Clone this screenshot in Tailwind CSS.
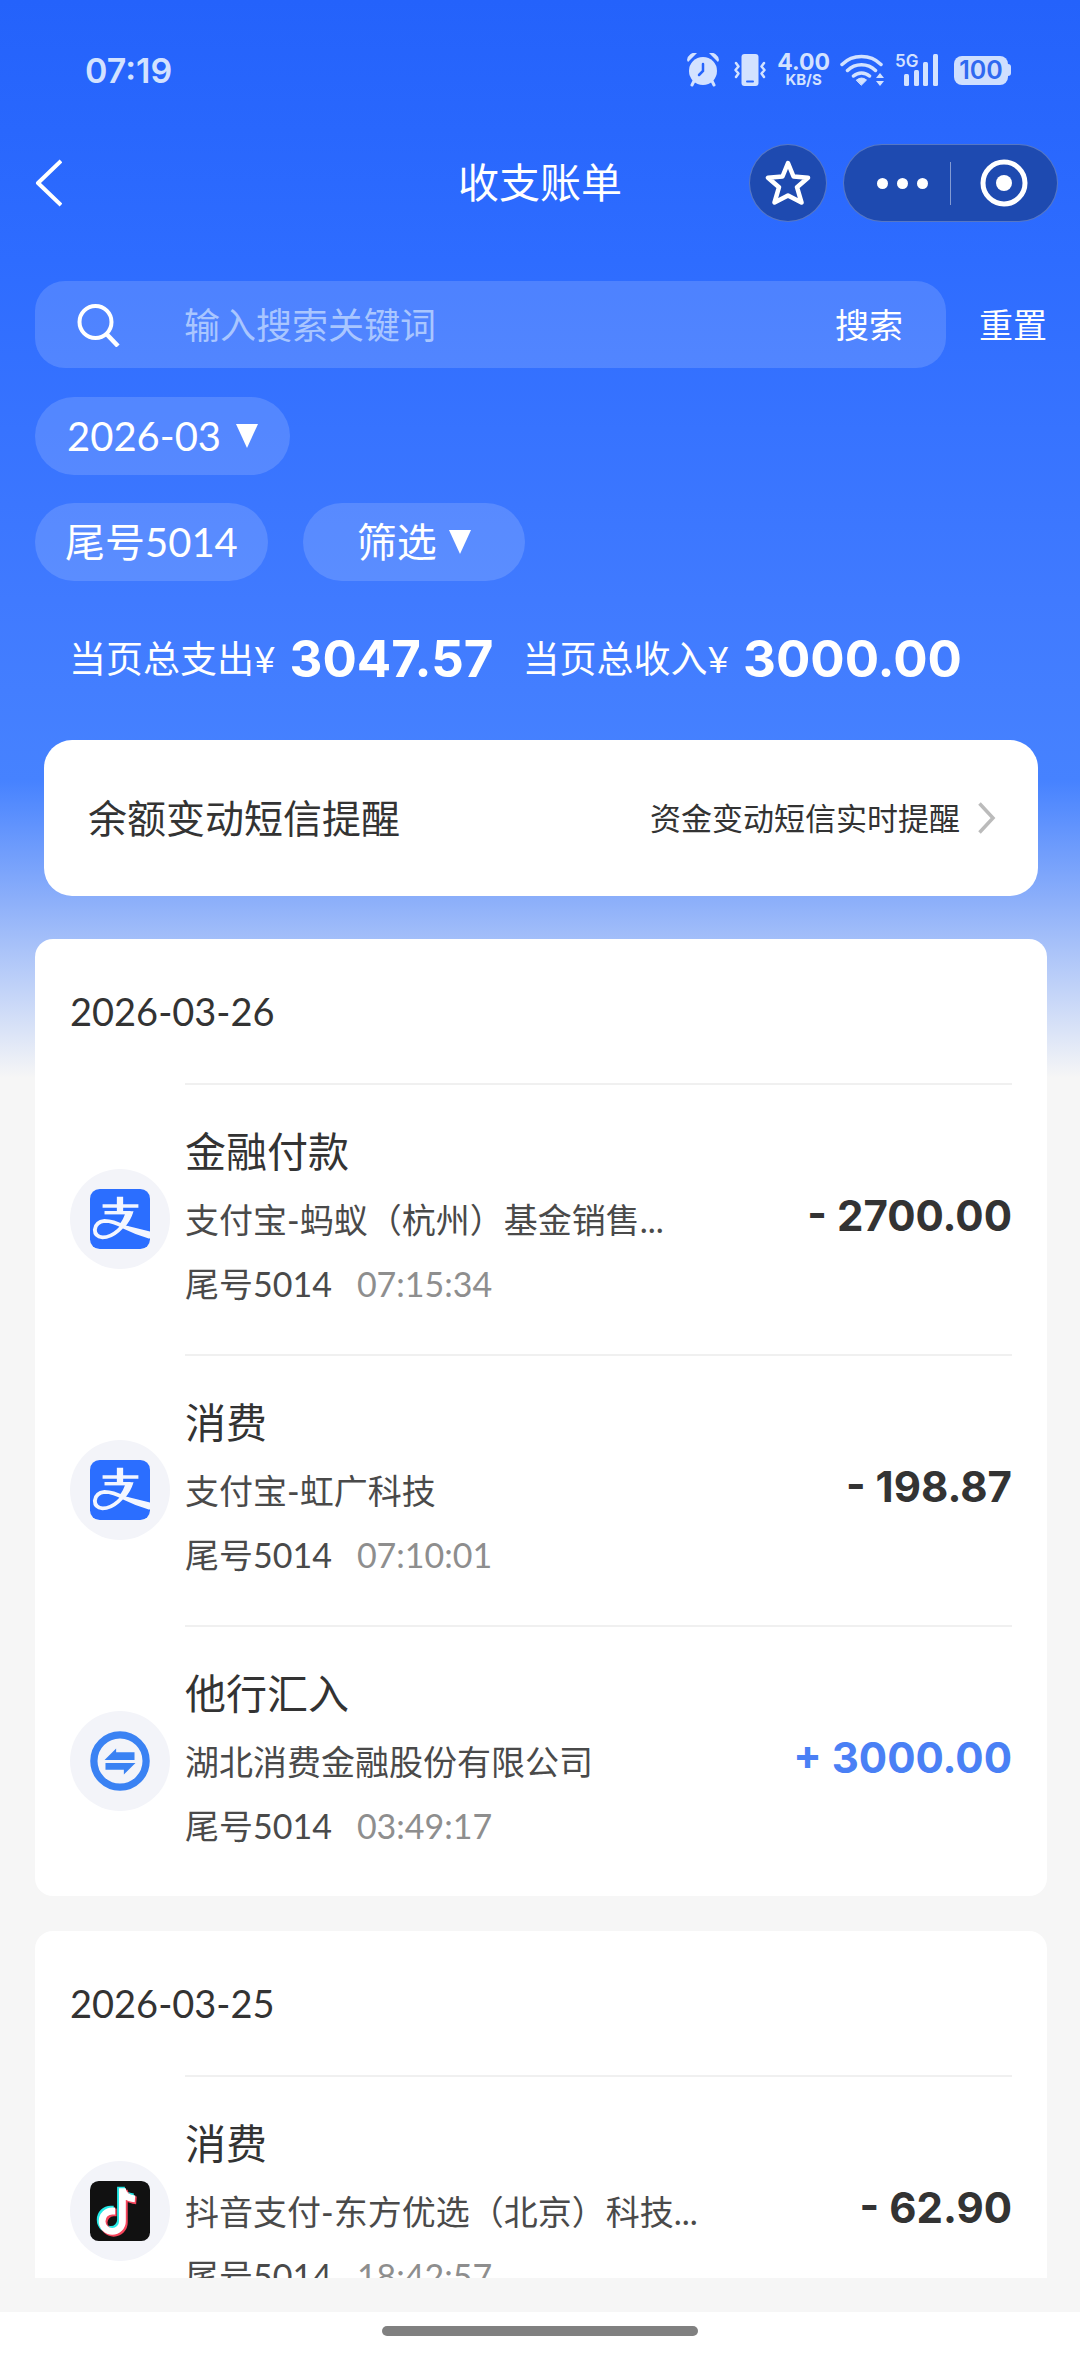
<!DOCTYPE html>
<html lang="zh-CN">
<head>
<meta charset="utf-8">
<meta name="viewport" content="width=device-width, initial-scale=1">
<title>收支账单</title>
<script src="https://cdn.jsdelivr.net/npm/@tailwindcss/browser@4"></script>
</head>
<body class="flex h-screen flex-col overflow-hidden bg-[#f6f6f6] bg-[linear-gradient(to_bottom,#2462fb_0px,#2e6cff_260px,#407aff_600px,#4682ff_780px,#8caffa_900px,#f6f6f6_1078px)] font-['Lato','Noto_Sans_CJK_SC',sans-serif] text-[#333]">

<!-- 状态栏 -->
<div class="flex h-[140px] shrink-0 items-center justify-between pl-[85px] pr-[69px] text-[#d3e2ff]">
  <time class="font-['Inter',sans-serif] text-[34px] font-semibold">07:19</time>
  <div class="flex items-center">
    <svg class="mr-[15px] h-[34px] w-8" viewBox="0 0 32 34" fill="currentColor" aria-label="闹钟">
      <path d="M0 7a8 8 0 0 1 10-7L1 9zM32 7a8 8 0 0 0-10-7l9 9z"/>
      <path d="M7 28l-2 4M25 28l2 4" stroke="currentColor" stroke-width="3" stroke-linecap="round"/>
      <circle cx="16" cy="18" r="14"/>
      <path d="M16 11v7l-4 4" fill="none" stroke="#2664fc" stroke-width="2.5" stroke-linecap="round"/>
    </svg>
    <svg class="mr-[11px] h-8 w-8" viewBox="0 0 32 32" fill="none" stroke="currentColor" stroke-width="2.5" stroke-linecap="round" stroke-linejoin="round" aria-label="振动">
      <rect x="7.500" y="0" width="17" height="32" rx="3" fill="currentColor" stroke="none"/>
      <path d="M13 27.500h6" stroke="#2664fc" stroke-width="2"/>
      <path d="M2 9l2.500 3.500L1.500 16l3 3.500L2 23M30 9l-2.500 3.500 3 3.500-3 3.500L30 23"/>
    </svg>
    <div class="mr-[10px] text-center font-['Inter',sans-serif] font-bold">
      <div class="text-[23px] leading-[19px]">4.00</div>
      <div class="text-[15px] leading-[15px]">KB/S</div>
    </div>
    <svg class="mr-3 h-8 w-11" viewBox="0 0 44 32" fill="none" stroke="currentColor" stroke-width="3.500" stroke-linecap="round" aria-label="无线网络">
      <path d="M2 10.500a28 28 0 0 1 39 0M7.500 16.500a20 20 0 0 1 28 0M13.500 22a12 12 0 0 1 16 0"/>
      <path d="M16.500 26q5-4 10 0l-5 5z" fill="currentColor" stroke-width="1"/>
      <path d="M36 24l4-5 4 5zM36 27l4 5 4-5z" fill="currentColor" stroke="none"/>
    </svg>
    <svg class="mr-4 h-8 w-[42px] overflow-visible" viewBox="0 0 42 32" fill="currentColor" aria-label="5G信号">
      <text x="-1" y="13" class="font-['Inter',sans-serif] text-[17px] font-semibold">5G</text>
      <rect x="8" y="20" width="5" height="12" rx="1.500"/><rect x="18" y="16" width="5" height="16" rx="1.500"/>
      <rect x="27" y="8" width="5" height="24" rx="1.500"/><rect x="37" y="0" width="5" height="32" rx="1.500"/>
    </svg>
    <div class="flex items-center">
      <div class="flex h-[29px] w-[54px] items-center justify-center rounded-lg bg-[#cfdffe] font-['Inter',sans-serif] text-[25px] font-semibold leading-[29px] text-[#2f69f0]">100</div>
      <div class="h-3 w-[3px] rounded-r-full bg-[#cfdffe]"></div>
    </div>
  </div>
</div>

<!-- 导航栏 -->
<header class="grid h-[86px] shrink-0 grid-cols-[1fr_auto_1fr] items-center px-[22px] text-white">
  <button type="button" aria-label="返回" class="ml-3 justify-self-start">
    <svg class="h-12 w-7" viewBox="0 0 28 48" fill="none" stroke="currentColor" stroke-width="4" stroke-linejoin="round"><path d="M27 2L4 24l23 22"/></svg>
  </button>
  <h1 class="text-[41px] leading-[60px]">收支账单</h1>
  <div class="flex items-center gap-4 justify-self-end">
    <button type="button" aria-label="收藏" class="flex size-[78px] items-center justify-center rounded-full border border-white/25 bg-[#1e4ab0]">
      <svg class="size-[46px]" viewBox="0 0 46 46" fill="none" stroke="currentColor" stroke-width="4.500" stroke-linejoin="round"><path d="M23 3l5.500 13.500 14.500 1.200-11 9.500 4.500 15.300L23 35.500 9.500 42.500 14 27.200 3 17.700l14.500-1.200z"/></svg>
    </button>
    <div class="flex h-[78px] items-center rounded-full border border-white/25 bg-[#1e4ab0] pl-[33px] pr-[29px]">
      <button type="button" aria-label="更多" class="flex items-center gap-[9px] pr-[22px]">
        <span class="size-[11px] rounded-full bg-white"></span><span class="size-[11px] rounded-full bg-white"></span><span class="size-[11px] rounded-full bg-white"></span>
      </button>
      <span class="h-[43px] w-px bg-white/45"></span>
      <button type="button" aria-label="关闭" class="ml-[29px]">
        <svg class="size-[48px]" viewBox="0 0 48 48"><circle cx="24" cy="24" r="21" fill="none" stroke="currentColor" stroke-width="5"/><circle cx="24" cy="24" r="8" fill="currentColor"/></svg>
      </button>
    </div>
  </div>
</header>

<!-- 搜索与筛选 -->
<form class="mt-[55px] flex shrink-0 items-center pl-[35px] pr-[33px] text-[34px] text-white">
  <div class="flex h-[87px] min-w-0 flex-1 items-center rounded-[30px] bg-white/15 pl-[42px] pr-[43px]">
    <svg class="mr-[63px] size-[44px] shrink-0" viewBox="0 0 44 44" fill="none" stroke="currentColor" stroke-width="4" aria-hidden="true"><circle cx="18.500" cy="19" r="16"/><path d="M29.500 31L41 43" stroke-width="4.500"/></svg>
    <input type="search" aria-label="搜索关键词" placeholder="输入搜索关键词" class="h-[60px] min-w-0 flex-1 bg-transparent text-[36px] outline-none placeholder:text-[#a9c6ff]">
    <button type="submit" class="shrink-0 leading-[60px]">搜索</button>
  </div>
  <button type="reset" class="ml-[33px] shrink-0 leading-[60px]">重置</button>
</form>
<div class="mt-[29px] flex shrink-0 pl-[35px] text-[40px] text-white">
  <label class="flex h-[78px] items-center gap-[14px] rounded-full bg-white/15 px-8">
    <select aria-label="月份" class="appearance-none bg-transparent leading-[60px] outline-none"><option>2026-03</option></select>
    <svg class="h-6 w-[22px]" viewBox="0 0 22 24" fill="currentColor" aria-hidden="true"><path d="M0 0h22L11 24z"/></svg>
  </label>
</div>
<div class="mt-7 flex shrink-0 gap-[35px] pl-[35px] text-[40px] text-white">
  <button type="button" class="h-[78px] rounded-full bg-white/15 px-[30px] leading-[60px]">尾号5014</button>
  <button type="button" class="flex h-[78px] items-center gap-3 rounded-full bg-white/15 px-[54px] leading-[60px]">筛选
    <svg class="h-6 w-[22px]" viewBox="0 0 22 24" fill="currentColor" aria-hidden="true"><path d="M0 0h22L11 24z"/></svg>
  </button>
</div>

<!-- 当页合计 -->
<dl class="mt-[42px] flex h-[72px] shrink-0 items-center pl-[69px] text-white">
  <dt class="text-[37px] leading-[60px]">当页总支出¥</dt>
  <dd class="ml-[14px] mr-[29px] font-['Inter',sans-serif] text-[51px] font-bold leading-[60px]">3047.57</dd>
  <dt class="text-[37px] leading-[60px]">当页总收入¥</dt>
  <dd class="ml-[14px] font-['Inter',sans-serif] text-[51px] font-bold leading-[60px]">3000.00</dd>
</dl>

<a href="#sms" class="ml-[44px] mr-[42px] mt-[45px] flex h-[156px] shrink-0 items-center rounded-[28px] bg-white pl-11 pr-[42px]">
  <span class="flex-1 text-[39px] leading-[60px]">余额变动短信提醒</span>
  <span class="mr-[18px] text-[31px] leading-[60px]">资金变动短信实时提醒</span>
  <svg class="h-8 w-[18px]" viewBox="0 0 18 32" fill="none" stroke="#bbb" stroke-width="3.500" aria-hidden="true"><path d="M1.500 1.500L15 16 1.500 30.500"/></svg>
</a>

<!-- 账单列表 -->
<main class="ml-[35px] mr-[33px] mt-[43px] flex min-h-0 flex-1 flex-col gap-[35px] overflow-hidden">
  <section class="shrink-0 rounded-[18px] bg-white px-[35px]">
    <h2 class="flex h-[144px] items-center text-[38px]">2026-03-26</h2>
    <ul>
      <li class="flex items-center gap-[15px]">
        <span class="flex size-[100px] shrink-0 items-center justify-center rounded-full bg-[#f3f4f9]">
          <svg class="size-[60px]" viewBox="0 0 62 62" aria-label="支付宝">
            <rect width="62" height="62" rx="10" fill="#2b6eff"/>
            <g fill="none" stroke="#f3f6ff"><path d="M13 17.500h37" stroke-width="3.500"/><path d="M31 8v17" stroke-width="6.500"/><path d="M15 24.500h27" stroke-width="3.500"/><path d="M42 24q-5 12-13 19-8 7-16 7-8-1-8-8 1-8 10-9 9 0 20 6 12 6 27 10.500" stroke-width="4"/></g>
            <path d="M37 23h8q-3 10-9 16l-6-2q5-6 7-14zM38 38l24 6v7L34 39z" fill="#f3f6ff"/>
          </svg>
        </span>
        <div class="flex min-w-0 flex-1 items-center border-t-2 border-[#f0f0f0] pb-[38px] pt-[31px]">
          <div class="min-w-0 flex-1">
            <h3 class="text-[41px] leading-[72px]">金融付款</h3>
            <p class="truncate text-[34px] leading-[64px] text-[#4a4a4a]">支付宝-蚂蚁（杭州）基金销售...</p>
            <p class="flex gap-[25px] text-[34px] leading-[64px] text-[#4a4a4a]">尾号5014<time class="text-[#8e8e8e]">07:15:34</time></p>
          </div>
          <strong class="font-['Inter',sans-serif] text-[42px] font-bold leading-[60px]">- 2700.00</strong>
        </div>
      </li>
      <li class="flex items-center gap-[15px]">
        <span class="flex size-[100px] shrink-0 items-center justify-center rounded-full bg-[#f3f4f9]">
          <svg class="size-[60px]" viewBox="0 0 62 62" aria-label="支付宝">
            <rect width="62" height="62" rx="10" fill="#2b6eff"/>
            <g fill="none" stroke="#f3f6ff"><path d="M13 17.500h37" stroke-width="3.500"/><path d="M31 8v17" stroke-width="6.500"/><path d="M15 24.500h27" stroke-width="3.500"/><path d="M42 24q-5 12-13 19-8 7-16 7-8-1-8-8 1-8 10-9 9 0 20 6 12 6 27 10.500" stroke-width="4"/></g>
            <path d="M37 23h8q-3 10-9 16l-6-2q5-6 7-14zM38 38l24 6v7L34 39z" fill="#f3f6ff"/>
          </svg>
        </span>
        <div class="flex min-w-0 flex-1 items-center border-t-2 border-[#f0f0f0] pb-[38px] pt-[31px]">
          <div class="min-w-0 flex-1">
            <h3 class="text-[41px] leading-[72px]">消费</h3>
            <p class="truncate text-[34px] leading-[64px] text-[#4a4a4a]">支付宝-虹广科技</p>
            <p class="flex gap-[25px] text-[34px] leading-[64px] text-[#4a4a4a]">尾号5014<time class="text-[#8e8e8e]">07:10:01</time></p>
          </div>
          <strong class="font-['Inter',sans-serif] text-[42px] font-bold leading-[60px]">- 198.87</strong>
        </div>
      </li>
      <li class="flex items-center gap-[15px]">
        <span class="flex size-[100px] shrink-0 items-center justify-center rounded-full bg-[#f3f4f9]">
          <svg class="size-[60px]" viewBox="0 0 62 62" aria-label="转账">
            <circle cx="31" cy="31" r="27" fill="none" stroke="#3a82f3" stroke-width="7.500"/>
            <path d="M15 30l12-12v4h19v8zM47 33H16v7h19v5z" fill="#3a82f3"/>
          </svg>
        </span>
        <div class="flex min-w-0 flex-1 items-center border-t-2 border-[#f0f0f0] pb-[38px] pt-[31px]">
          <div class="min-w-0 flex-1">
            <h3 class="text-[41px] leading-[72px]">他行汇入</h3>
            <p class="truncate text-[34px] leading-[64px] text-[#4a4a4a]">湖北消费金融股份有限公司</p>
            <p class="flex gap-[25px] text-[34px] leading-[64px] text-[#4a4a4a]">尾号5014<time class="text-[#8e8e8e]">03:49:17</time></p>
          </div>
          <strong class="font-['Inter',sans-serif] text-[42px] font-bold leading-[60px] text-[#4a80f5]">+ 3000.00</strong>
        </div>
      </li>
    </ul>
  </section>

  <section class="shrink-0 rounded-[18px] bg-white px-[35px]">
    <h2 class="flex h-[144px] items-center text-[38px]">2026-03-25</h2>
    <ul>
      <li class="flex items-center gap-[15px]">
        <span class="flex size-[100px] shrink-0 items-center justify-center rounded-full bg-[#f3f4f9]">
          <svg class="size-[60px]" viewBox="0 0 62 62" aria-label="抖音">
            <rect width="62" height="62" rx="9" fill="#111"/>
            <g fill="none" stroke-width="8">
              <path d="M32 6v34a10.500 10.500 0 1 1-10.500-10.500h3M32 7q1 9 13 10" stroke="#25e8e6"/>
              <path d="M35 9v34a10.500 10.500 0 1 1-10.500-10.500h3M35 10q1 9 13 10" stroke="#f5455c"/>
              <path d="M33.500 7.500v34a10.500 10.500 0 1 1-10.500-10.500h3M33.500 8.500q1 9 13 10" stroke="#fff" stroke-width="7"/>
            </g>
          </svg>
        </span>
        <div class="flex min-w-0 flex-1 items-center border-t-2 border-[#f0f0f0] pb-[38px] pt-[31px]">
          <div class="min-w-0 flex-1">
            <h3 class="text-[41px] leading-[72px]">消费</h3>
            <p class="truncate text-[34px] leading-[64px] text-[#4a4a4a]">抖音支付-东方优选（北京）科技...</p>
            <p class="flex gap-[25px] text-[34px] leading-[64px] text-[#4a4a4a]">尾号5014<time class="text-[#8e8e8e]">18:42:57</time></p>
          </div>
          <strong class="font-['Inter',sans-serif] text-[42px] font-bold leading-[60px]">- 62.90</strong>
        </div>
      </li>
    </ul>
  </section>
</main>

<!-- 系统手势条 -->
<footer class="mt-[34px] flex h-[42px] shrink-0 items-start justify-center bg-white pt-[14px]">
  <div class="h-[10px] w-[316px] rounded-full bg-[#808080]"></div>
</footer>
</body>
</html>
